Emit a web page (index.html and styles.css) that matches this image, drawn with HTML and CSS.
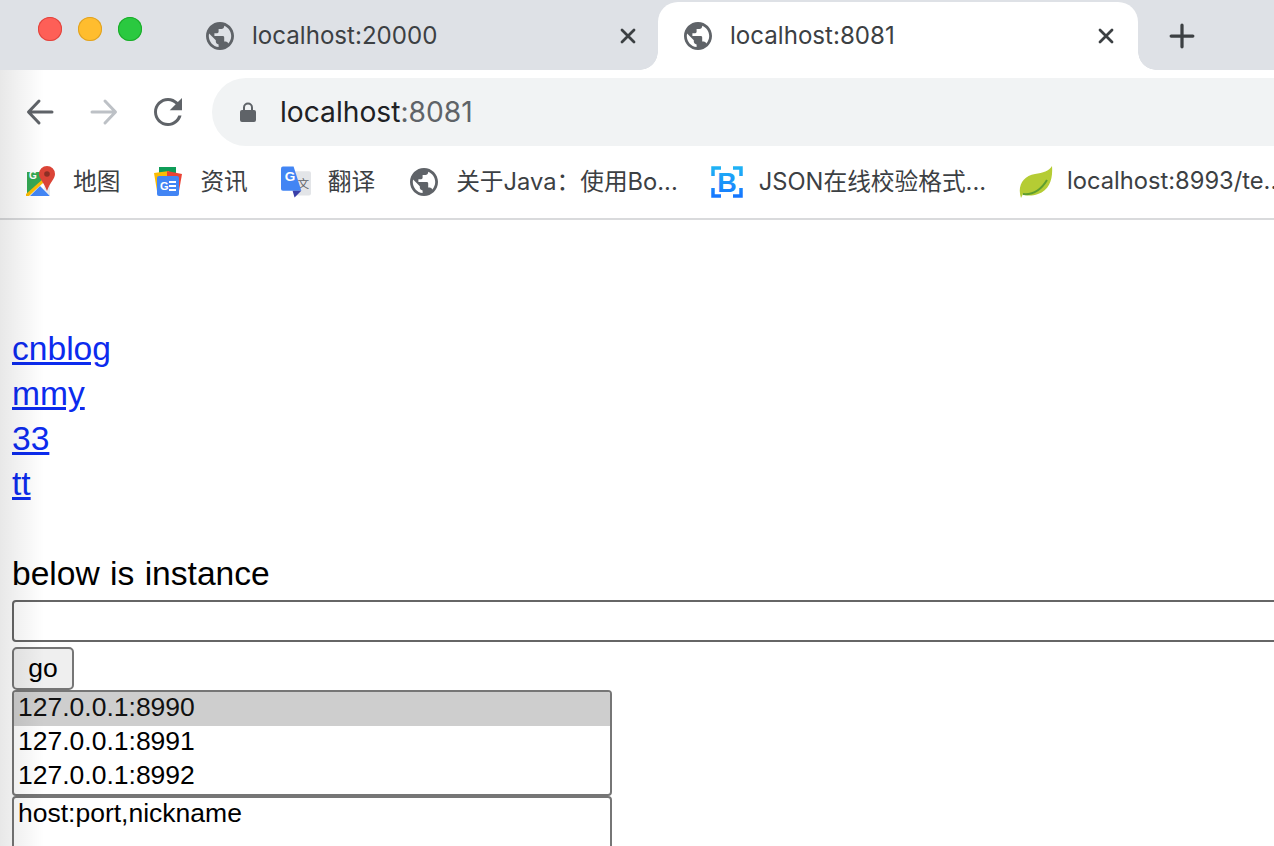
FILE: index.html
```html
<!DOCTYPE html>
<html lang="en">
<head>
<meta charset="utf-8">
<title>localhost:8081</title>
<link rel="stylesheet" href="styles.css">
</head>
<body>
<svg class="defs" width="0" height="0" aria-hidden="true">
  <symbol id="globe" viewBox="2 2 20 20"><path fill="#5f6368" d="M12 2C6.48 2 2 6.48 2 12s4.48 10 10 10 10-4.48 10-10S17.52 2 12 2zm-1 17.93c-3.95-.49-7-3.85-7-7.93 0-.62.08-1.21.21-1.79L9 15v1c0 1.1.9 2 2 2v1.93zm6.9-2.54c-.26-.81-1-1.39-1.9-1.39h-1v-3c0-.55-.45-1-1-1H8v-2h2c.55 0 1-.45 1-1V7h2c1.1 0 2-.9 2-2v-.41c2.93 1.19 5 4.06 5 7.41 0 2.08-.8 3.97-2.1 5.39z"/></symbol>
  <symbol id="close" viewBox="0 0 16 16"><path d="M2 2l12 12M14 2L2 14" stroke="#3c4043" stroke-width="2.8" stroke-linecap="round" fill="none"/></symbol>
</svg>

<header class="tabstrip">
  <div class="lights"><span class="light red"></span><span class="light amber"></span><span class="light green"></span></div>
  <div class="tab">
    <svg class="fav"><use href="#globe"/></svg>
    <span class="tab-title">localhost:20000</span>
    <svg class="tab-close"><use href="#close"/></svg>
  </div>
  <div class="tab active">
    <svg class="fav"><use href="#globe"/></svg>
    <span class="tab-title">localhost:8081</span>
    <svg class="tab-close"><use href="#close"/></svg>
  </div>
  <svg class="plus" viewBox="0 0 24 24"><path d="M12 2v20M2 12h20" stroke="#3c4043" stroke-width="3" stroke-linecap="round" fill="none"/></svg>
</header>

<div class="toolbar">
  <svg class="nav-icon" viewBox="0 0 28 28"><path d="M26 14H3M13 3L2.500 14 13 25" stroke="#5f6368" stroke-width="3" stroke-linecap="round" stroke-linejoin="round" fill="none"/></svg>
  <svg class="nav-icon" viewBox="0 0 28 28"><path d="M2 14h23M15 3l10.500 11L15 25" stroke="#bdc1c6" stroke-width="3" stroke-linecap="round" stroke-linejoin="round" fill="none"/></svg>
  <svg class="nav-icon reload" viewBox="4 4 16 16"><path fill="#5f6368" d="M17.650 6.350C16.200 4.900 14.210 4 12 4c-4.420 0-7.990 3.580-7.990 8s3.570 8 7.990 8c3.730 0 6.840-2.550 7.730-6h-1.850c-.82 2.450-3.140 4.300-5.880 4.300-3.480 0-6.300-2.820-6.300-6.300s2.820-6.300 6.300-6.300c1.740 0 3.240.74 4.400 1.900L13 11h7V4l-2.350 2.350z"/></svg>
  <div class="omnibox">
    <svg class="lock" viewBox="0 0 16 20"><path fill="#5f6368" d="M3 8V5.500a5 5 0 0 1 10 0V8h1a2 2 0 0 1 2 2v8a2 2 0 0 1-2 2H2a2 2 0 0 1-2-2v-8a2 2 0 0 1 2-2zm2 0h6V5.500a3 3 0 0 0-6 0z"/></svg>
    <span class="url">localhost<span class="port">:8081</span></span>
  </div>
</div>

<nav class="bookmarks">
  <div class="bm">
    <svg class="bm-icon" viewBox="0 0 30 32">
      <path fill="#34a853" d="M1 6h20v8L1 28z"/>
      <path fill="#fbbc04" d="M0 28L17 13l2 2L3 30H0z"/>
      <path fill="#4285f4" d="M4 30l10-10 10 10z"/>
      <path fill="#e8eaed" d="M19 16l5 0 0 14-6-7z"/>
      <path fill="#db4437" d="M21 0a8 8 0 0 1 8 8c0 5-5 8-8 17-3-9-8-12-8-17a8 8 0 0 1 8-8z"/>
      <circle cx="21" cy="8" r="2.800" fill="#8c2f25"/>
      <text x="3" y="13" class="logo-g">G</text>
    </svg>
    <span>地图</span>
  </div>
  <div class="bm">
    <svg class="bm-icon" viewBox="0 0 30 32">
      <path fill="#0f9d58" d="M6 1h17v12H6z"/>
      <path fill="#fbbc04" d="M1 7l15-2 3 20H4z"/>
      <path fill="#ea4335" d="M14 5l15 3-3 17H14z"/>
      <rect x="4" y="10" width="22" height="20" rx="2" fill="#4285f4"/>
      <text x="7" y="24" class="logo-news">G</text>
      <path d="M16 16h7M16 20h7M16 24h7" stroke="#fff" stroke-width="1.800"/>
    </svg>
    <span>资讯</span>
  </div>
  <div class="bm">
    <svg class="bm-icon" viewBox="0 0 31 32">
      <rect x="13" y="5" width="18" height="25" rx="2" fill="#e3e5e8"/>
      <text x="17" y="22" class="logo-wen">文</text>
      <path fill="#4285f4" d="M2 0h11l8 25H2a2 2 0 0 1-2-2V2a2 2 0 0 1 2-2z"/>
      <path fill="#3a3fa8" d="M12 25h9l-7 7z"/>
      <text x="4" y="15" class="logo-g big">G</text>
    </svg>
    <span>翻译</span>
  </div>
  <div class="bm bm-globe">
    <svg class="bm-icon globe-icon"><use href="#globe"/></svg>
    <span>关于Java：使用Bo...</span>
  </div>
  <div class="bm bm-json">
    <svg class="bm-icon json-icon" viewBox="0 0 32 32">
      <defs><linearGradient id="bg" x1="0" y1="0" x2="0" y2="1"><stop offset="0" stop-color="#1fb2f5"/><stop offset="1" stop-color="#1677ff"/></linearGradient></defs>
      <path fill="none" stroke="url(#bg)" stroke-width="3.500" d="M2 10V2h8M22 2h8v8M30 22v8h-8M10 30H2v-8"/>
      <text x="16" y="25.500" class="logo-b" fill="url(#bg)">B</text>
    </svg>
    <span>JSON在线校验格式...</span>
  </div>
  <div class="bm bm-leaf">
    <svg class="bm-icon leaf" viewBox="0 0 34 32">
      <path fill="#b5cc34" d="M33 0c1 12-2 24-14 28-6 2-12 2-15 0L2 32C-2 20 4 10 16 8c8-1 14-3 17-8z"/>
      <path fill="none" stroke="#5f9e2f" stroke-width="2" d="M4 28c10 1 18-4 24-14"/>
    </svg>
    <span>localhost:8993/te...</span>
  </div>
</nav>

<main class="page">
  <div class="links">
    <a href="#">cnblog</a>
    <a href="#">mmy</a>
    <a href="#">33</a>
    <a href="#">tt</a>
  </div>
  <p class="label">below is instance</p>
  <input class="text-input" type="text">
  <button class="go" type="button">go</button>
  <select class="instances" size="3">
    <option selected>127.0.0.1:8990</option>
    <option>127.0.0.1:8991</option>
    <option>127.0.0.1:8992</option>
  </select>
  <textarea class="hosts">host:port,nickname</textarea>
</main>

<div class="edge-shade"></div>
</body>
</html>
```
FILE: styles.css
```css
* { box-sizing: border-box; }
html, body { margin: 0; height: 100%; overflow: hidden; background: #fff; }
body { position: relative; width: 1274px; height: 846px; font-family: Inter, "Noto Sans CJK SC", sans-serif; }
.defs { position: absolute; }

.tabstrip { height: 70px; background: #dee1e6; display: flex; align-items: stretch; padding-top: 2px; }
.lights { width: 180px; padding: 15px 0 0 38px; display: flex; gap: 16px; align-items: flex-start; flex: none; }
.light { width: 24px; height: 24px; border-radius: 50%; }
.red { background: #fe5f57; box-shadow: inset 0 0 0 1px #e0443e; }
.amber { background: #ffbd2e; box-shadow: inset 0 0 0 1px #dea123; }
.green { background: #2ac940; box-shadow: inset 0 0 0 1px #1aab29; }

.tab { width: 478px; display: flex; align-items: center; padding: 0 22px 0 26px; position: relative; flex: none; color: #3c4043; }
.tab.active { width: 480px; background: #fff; border-radius: 20px 20px 0 0; padding: 0 24px 0 26px; color: #3c4043; }
.tab.active::before, .tab.active::after { content: ""; position: absolute; bottom: 0; width: 18px; height: 18px; }
.tab.active::before { left: -18px; background: radial-gradient(circle at 0 0, transparent 17.500px, #fff 18px); }
.tab.active::after { right: -18px; background: radial-gradient(circle at 100% 0, transparent 17.500px, #fff 18px); }
.fav { width: 28px; height: 28px; flex: none; }
.tab-title { margin-left: 18px; font-size: 24.100px; flex: 1; white-space: nowrap; margin-bottom: 1px; }
.tab-close { width: 16px; height: 16px; flex: none; }
.plus { width: 26px; height: 26px; margin: 21px 0 0 31px; flex: none; }

.toolbar { height: 84px; background: #fff; display: flex; align-items: center; padding: 0 0 0 26px; }
.nav-icon { width: 28px; height: 28px; flex: none; margin-right: 36px; }
.reload { margin-right: 30px; margin-left: 0; }
.omnibox { flex: 1; height: 68px; background: #f1f3f4; border-radius: 34px 0 0 34px; display: flex; align-items: center; padding-left: 28px; }
.lock { width: 16px; height: 20px; flex: none; }
.url { margin-left: 24px; font-size: 28.200px; color: #202124; }
.port { color: #5f6368; }

.bookmarks { height: 66px; border-bottom: 2px solid #d9dadc; background: #fff; display: flex; align-items: center; gap: 33px; padding: 0 0 8px 26px; white-space: nowrap; font-size: 23.700px; color: #3c4043; }
.bm { display: flex; align-items: center; gap: 17px; flex: none; }
.bm span { margin-bottom: 4px; }
.bm-globe { margin-left: 2px; gap: 18px; }
.bm-json { gap: 16px; }
.bm-leaf { gap: 14px; }
.bm-icon { width: 30px; height: 32px; flex: none; }
.globe-icon { width: 28px; height: 28px; }
.json-icon { width: 32px; }
.leaf { width: 34px; }
.logo-g { font: bold 10px "Liberation Sans", sans-serif; fill: #fff; }
.logo-g.big { font-size: 14px; }
.logo-news { font: bold 11px "Liberation Sans", sans-serif; fill: #fff; }
.logo-wen { font: 12px "Noto Sans CJK SC", sans-serif; fill: #5f6368; }
.logo-b { font: bold 27px "Liberation Sans", sans-serif; text-anchor: middle; }

.page { padding: 106px 0 0 12px; font-family: "Liberation Sans", Arial, sans-serif; font-size: 33.600px; line-height: 45px; color: #000; }
.links a { display: block; width: fit-content; color: #0c2bee; text-decoration: underline; }
.label { margin: 45px 0 0; word-spacing: 1px; }
.text-input { display: block; width: 1400px; height: 42px; margin-top: 4px; border: 2px solid #666; border-radius: 4px; background: #fff; padding: 0; }
.go { display: block; width: 62px; height: 43px; margin-top: 5px; padding: 0; border: 2px solid #767676; border-radius: 5px; background: #efefef; font: 26.500px "Liberation Sans", Arial, sans-serif; color: #000; }
.instances { display: block; width: 600px; height: 106px; margin: 0; padding: 0; border: 2px solid #767676; border-radius: 4px; font: 26.500px "Liberation Sans", Arial, sans-serif; color: #000; background: #fff; overflow: hidden; }
.instances option { height: 34px; line-height: 32px; padding: 0 4px; min-height: 34px; }
.hosts { display: block; width: 600px; height: 120px; margin: 0; padding: 0 4px; border: 2px solid #767676; border-radius: 4px; font: 26.500px/30px "Liberation Sans", Arial, sans-serif; color: #000; resize: none; }

.edge-shade { position: absolute; left: 0; top: 70px; bottom: 0; width: 44px; pointer-events: none; background: linear-gradient(to right, rgba(0, 0, 0, .09), rgba(0, 0, 0, 0)); }
```
